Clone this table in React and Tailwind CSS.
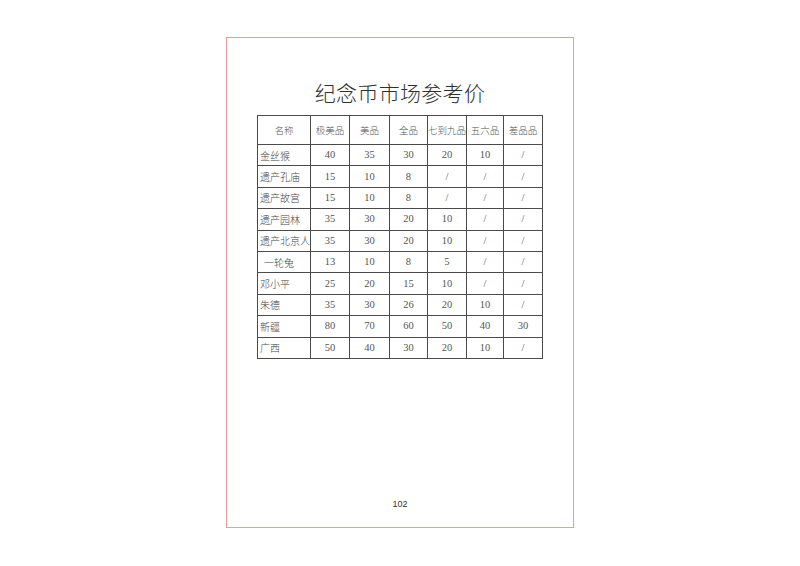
import React from 'react'

const headers = ["名称", "极美品", "美品", "全品", "七到九品", "五六品", "差品品"];

const rows = [
  ["金丝猴", "40", "35", "30", "20", "10", "/"],
  ["遗产孔庙", "15", "10", "8", "/", "/", "/"],
  ["遗产故宫", "15", "10", "8", "/", "/", "/"],
  ["遗产园林", "35", "30", "20", "10", "/", "/"],
  ["遗产北京人", "35", "30", "20", "10", "/", "/"],
  ["一轮兔", "13", "10", "8", "5", "/", "/"],
  ["邓小平", "25", "20", "15", "10", "/", "/"],
  ["朱德", "35", "30", "26", "20", "10", "/"],
  ["新疆", "80", "70", "60", "50", "40", "30"],
  ["广西", "50", "40", "30", "20", "10", "/"],
];

const widths = ["w-[52px]", "w-[39px]", "w-[40px]", "w-[38px]", "w-[39px]", "w-[37px]", "w-[39px]"];

const cjk = { fontFamily: '"Noto Sans CJK SC", "Liberation Sans", sans-serif' };
const serif = { fontFamily: '"Liberation Serif", "Noto Sans CJK SC", serif' };

const App = () => {
  return (
    <div className="w-[800px] h-[566px] bg-white flex justify-center">
      <div className="mt-[37px] w-[348px] h-[491px] border border-[#ee9a9a] flex flex-col items-center">
        <h1
          className="mt-[42px] text-[21px] leading-[24px] font-light text-[#2f2f2f] tracking-[0.3px]"
          style={cjk}
        >
          纪念币市场参考价
        </h1>

        <table className="mt-[11px] border-collapse border border-[#333] table-fixed">
          <thead>
            <tr className="h-[29px]">
              {headers.map((h, i) => (
                <th
                  key={h}
                  className={`${widths[i]} border border-[#4a4a4a] p-0 text-[9.5px] font-light text-[#555] text-center whitespace-nowrap`}
                  style={cjk}
                >
                  {h}
                </th>
              ))}
            </tr>
          </thead>
          <tbody>
            {rows.map((r) => (
              <tr key={r[0]} className="h-[21.4px]">
                {r.map((c, i) =>
                  i === 0 ? (
                    <td
                      key={i}
                      className={`border border-[#4a4a4a] p-0 text-[10px] font-light text-[#444] whitespace-nowrap ${r[0] === "一轮兔" ? "pl-[6px]" : "pl-[2px]"}`}
                      style={cjk}
                    >
                      {c}
                    </td>
                  ) : (
                    <td
                      key={i}
                      className="border border-[#4a4a4a] p-0 text-[10.5px] text-[#555] text-center"
                      style={serif}
                    >
                      {c}
                    </td>
                  )
                )}
              </tr>
            ))}
          </tbody>
        </table>

        <div
          className="mt-auto mb-[17px] text-[9px] leading-[12px] text-[#333]"
          style={{ fontFamily: '"Liberation Sans", sans-serif' }}
        >
          102
        </div>
      </div>
    </div>
  )
}

export default App
